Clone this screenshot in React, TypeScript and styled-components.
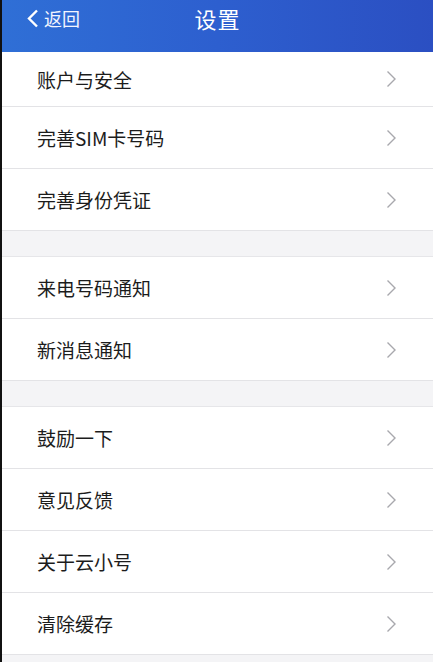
import React from 'react'
import styled, { createGlobalStyle } from 'styled-components';

const GlobalStyle = createGlobalStyle`
html, body {
  margin: 0;
  padding: 0;
  background: #f4f4f6;
  font-family: "Noto Sans CJK SC", "Noto Sans", sans-serif;
}
`;

const Page = styled.div`
width: 433px;
min-height: 662px;
box-sizing: border-box;
border-left: 2px solid #111;
background: #f4f4f6;
`;

const Header = styled.div`
height: 52px;
position: relative;
display: flex;
align-items: center;
justify-content: center;
background: linear-gradient(90deg, #2f6fd6 0%, #2d5fcf 50%, #2b4fc2 100%);
color: #fff;
`;

const Back = styled.div`
position: absolute;
left: 24px;
top: 0;
height: 36px;
display: flex;
align-items: center;
gap: 5px;
font-size: 18px;
color: #f2f5ff;
`;

const Title = styled.div`
font-size: 22px;
margin-top: -16px;
letter-spacing: 1px;
`;

const Group = styled.div`
background: #fff;
margin-bottom: 25px;
border-bottom: 1px solid #e3e3e6;
&:last-child {
  margin-bottom: 0;
}
& + & {
  border-top: 1px solid #e6e6e9;
}
`;

const Row = styled.div<{ $h?: number }>`
height: ${p => p.$h ?? 61}px;
display: flex;
align-items: center;
justify-content: space-between;
padding: 0 36px 0 35px;
& + & {
  border-top: 1px solid #e3e3e6;
}
`;

const Label = styled.span`
font-size: 19px;
color: #1c1c1c;
`;

const Chevron = () => (
  <svg width="11" height="18" viewBox="0 0 11 18">
    <path d="M1.5 1.5 L9 9 L1.5 16.5" fill="none" stroke="#a8a8ad" strokeWidth="1.4" />
  </svg>
);

const groups: string[][] = [
  ['账户与安全', '完善SIM卡号码', '完善身份凭证'],
  ['来电号码通知', '新消息通知'],
  ['鼓励一下', '意见反馈', '关于云小号', '清除缓存'],
];

export default function App() {
  return (
    <Page>
      <GlobalStyle />
      <Header>
        <Back>
          <svg width="13" height="19" viewBox="0 0 13 19">
            <path d="M11 1.5 L3 9.5 L11 17.5" fill="none" stroke="#fff" strokeWidth="2.4" />
          </svg>
          <span>返回</span>
        </Back>
        <Title>设置</Title>
      </Header>
      {groups.map((g, gi) => (
        <Group key={gi}>
          {g.map((item, i) => (
            <Row key={item} $h={gi === 0 && i === 0 ? 54 : 61}>
              <Label>{item}</Label>
              <Chevron />
            </Row>
          ))}
        </Group>
      ))}
    </Page>
  );
}
